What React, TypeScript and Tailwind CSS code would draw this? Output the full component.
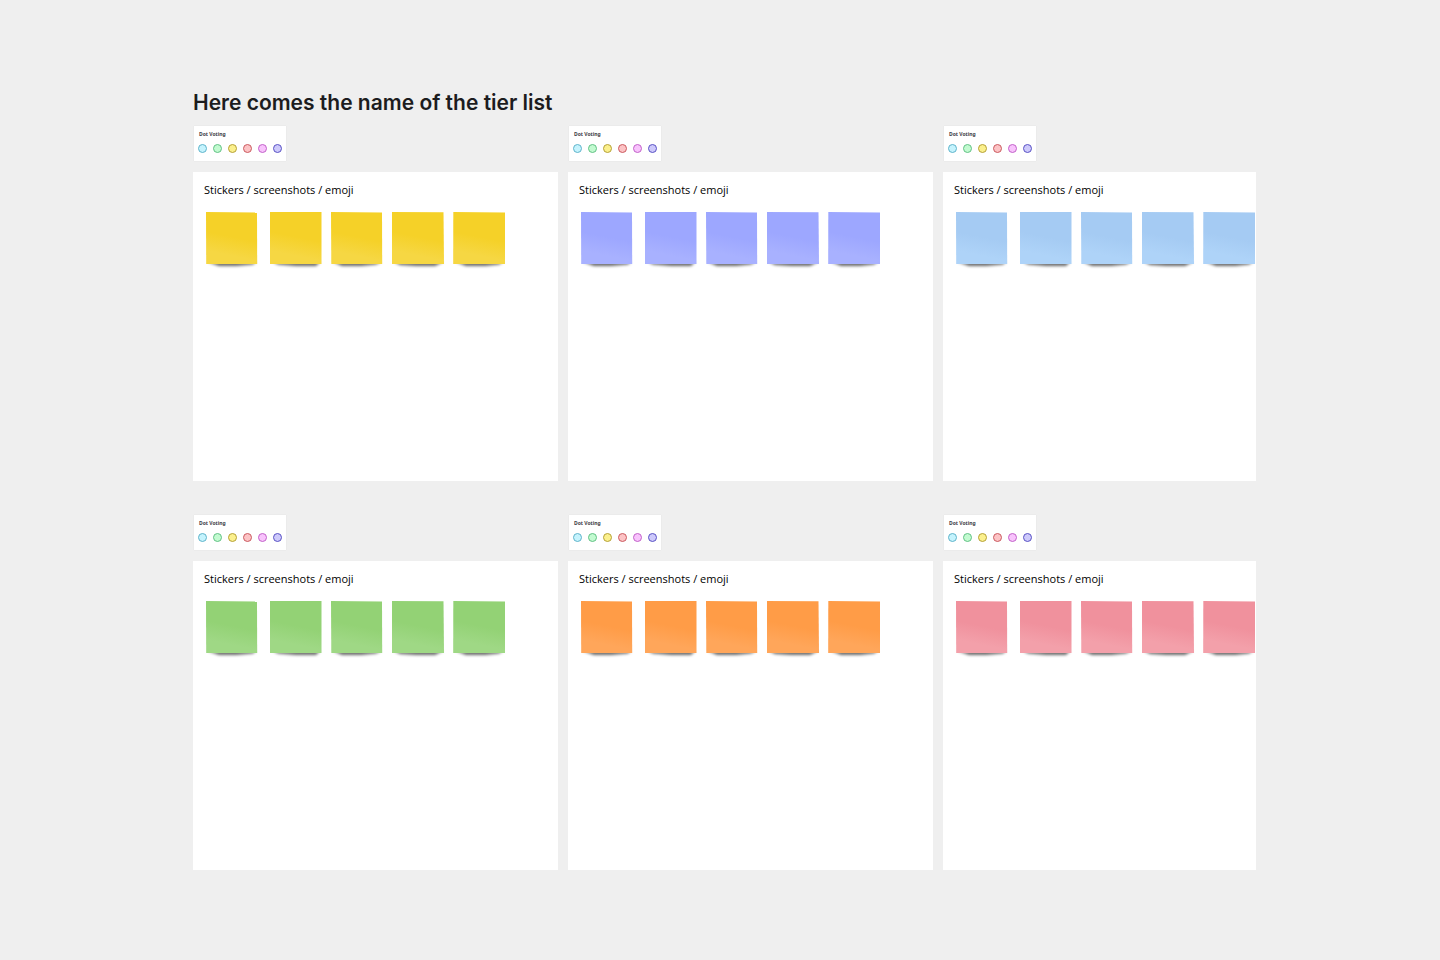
type Tone = { top: string; bottom: string };

const boards: { id: string; tone: Tone }[] = [
  { id: "yellow", tone: { top: "#f5d128", bottom: "#f6d743" } },
  { id: "violet", tone: { top: "#9da7ff", bottom: "#a8b1ff" } },
  { id: "blue", tone: { top: "#a5cbf3", bottom: "#aed3f8" } },
  { id: "green", tone: { top: "#93d275", bottom: "#9fd885" } },
  { id: "orange", tone: { top: "#ff9c47", bottom: "#ffa65a" } },
  { id: "pink", tone: { top: "#f0919d", bottom: "#f3a0aa" } },
];

const dots = [
  { name: "cyan", className: "border-[#5fb4cb] bg-[#c5f3fd]" },
  { name: "green", className: "border-[#62c285] bg-[#c2fad0]" },
  { name: "yellow", className: "border-[#b5a138] bg-[#fbf08d]" },
  { name: "red", className: "border-[#cb5a60] bg-[#fcc3c5]" },
  { name: "pink", className: "border-[#c262c9] bg-[#f8c3fc]" },
  { name: "violet", className: "border-[#5a52c4] bg-[#cdc9fb]" },
];

// slightly different corners and shadow tilt for each note
const notes = [
  { shape: "0,0 51,0.5 51.2,52 0.2,52", shadow: "2,50 50,50 47,52.5 30,54 13,54" },
  { shape: "0,0 51.5,0 51.5,52 0,52", shadow: "3,50 50,50 46,54 26,54 8,52.5" },
  { shape: "0,0 51,0.5 51.2,52 0.3,52", shadow: "2,50 50,50 45,52.5 30,54 11,54" },
  { shape: "0,0 51.5,0.2 52,52 0,52", shadow: "2,50 51,50 43,54 24,54 8,53" },
  { shape: "0.3,0 52,0.5 52,52 0.2,52", shadow: "3,50 50,50 46,52.5 32,54 13,54" },
];

const DotVoting = () => (
  <section className="w-[92px] ml-px h-[35px] pl-1 pt-1 bg-white shadow-[0_0_1px_rgba(0,0,0,0.1)]">
    <h3 className="pl-px font-['Noto_Sans',sans-serif] text-[5px] leading-[9px] font-bold text-[#3c3c44]">Dot Voting</h3>
    <div className="mt-[5px] flex gap-[6px]">
      {dots.map(_d => (
        <span key={_d.name} className={`size-[9px] rounded-full border ${_d.className}`} />
      ))}
    </div>
  </section>
);

const Notes = ({ id, tone }: { id: string; tone: Tone }) => (
  <div className="mt-[14px] pl-[13px] flex gap-[9px]">
    {notes.map((_n, i) => (
      <svg
        key={i}
        viewBox="0 0 52 58"
        className={`w-[52px] h-[58px] shrink-0 overflow-visible ${i === 0 ? "mr-[3px]" : ""}`}
        aria-hidden="true"
      >
        <defs>
          <linearGradient id={`${id}-${i}`} x1="0.2" y1="0" x2="0" y2="1">
            <stop offset="0" stopColor={tone.top} />
            <stop offset="0.4" stopColor={tone.top} />
            <stop offset="0.75" stopColor={tone.bottom} />
            <stop offset="1" stopColor={tone.bottom} />
          </linearGradient>
          <filter id={`${id}-${i}-blur`} x="-20%" y="-200%" width="140%" height="500%">
            <feGaussianBlur stdDeviation="1.6" />
          </filter>
        </defs>
        <polygon points={_n.shadow} fill="#000" fillOpacity="0.6" filter={`url(#${id}-${i}-blur)`} />
        <polygon points={_n.shape} fill={`url(#${id}-${i})`} />
      </svg>
    ))}
  </div>
);

const App = () => {

return (
  <main className="min-h-screen bg-[#efefef] pl-[193px] pr-[184px] pt-[89px] pb-[90px]">
    <h1 className="font-['Inter',sans-serif] text-[21px] leading-[28px] font-semibold text-[#1c1c1e]">
      Here comes the name of the tier list
    </h1>

    <div className="mt-[9px] grid grid-cols-[365fr_365fr_313fr] gap-x-[10px] gap-y-[34px]">
      {
        boards.map(_b => (
          <div key={_b.id} className="min-w-0">
            <DotVoting />
            <section className="mt-[11px] min-h-[309px] pt-[10px] bg-white">
              <h2 className="pl-[11px] font-['Open_Sans',sans-serif] text-[11px] leading-[16px] text-black">
                Stickers / screenshots / emoji
              </h2>
              <Notes id={_b.id} tone={_b.tone} />
            </section>
          </div>
        ))
      }
    </div>
  </main>
);

}

export default App;
